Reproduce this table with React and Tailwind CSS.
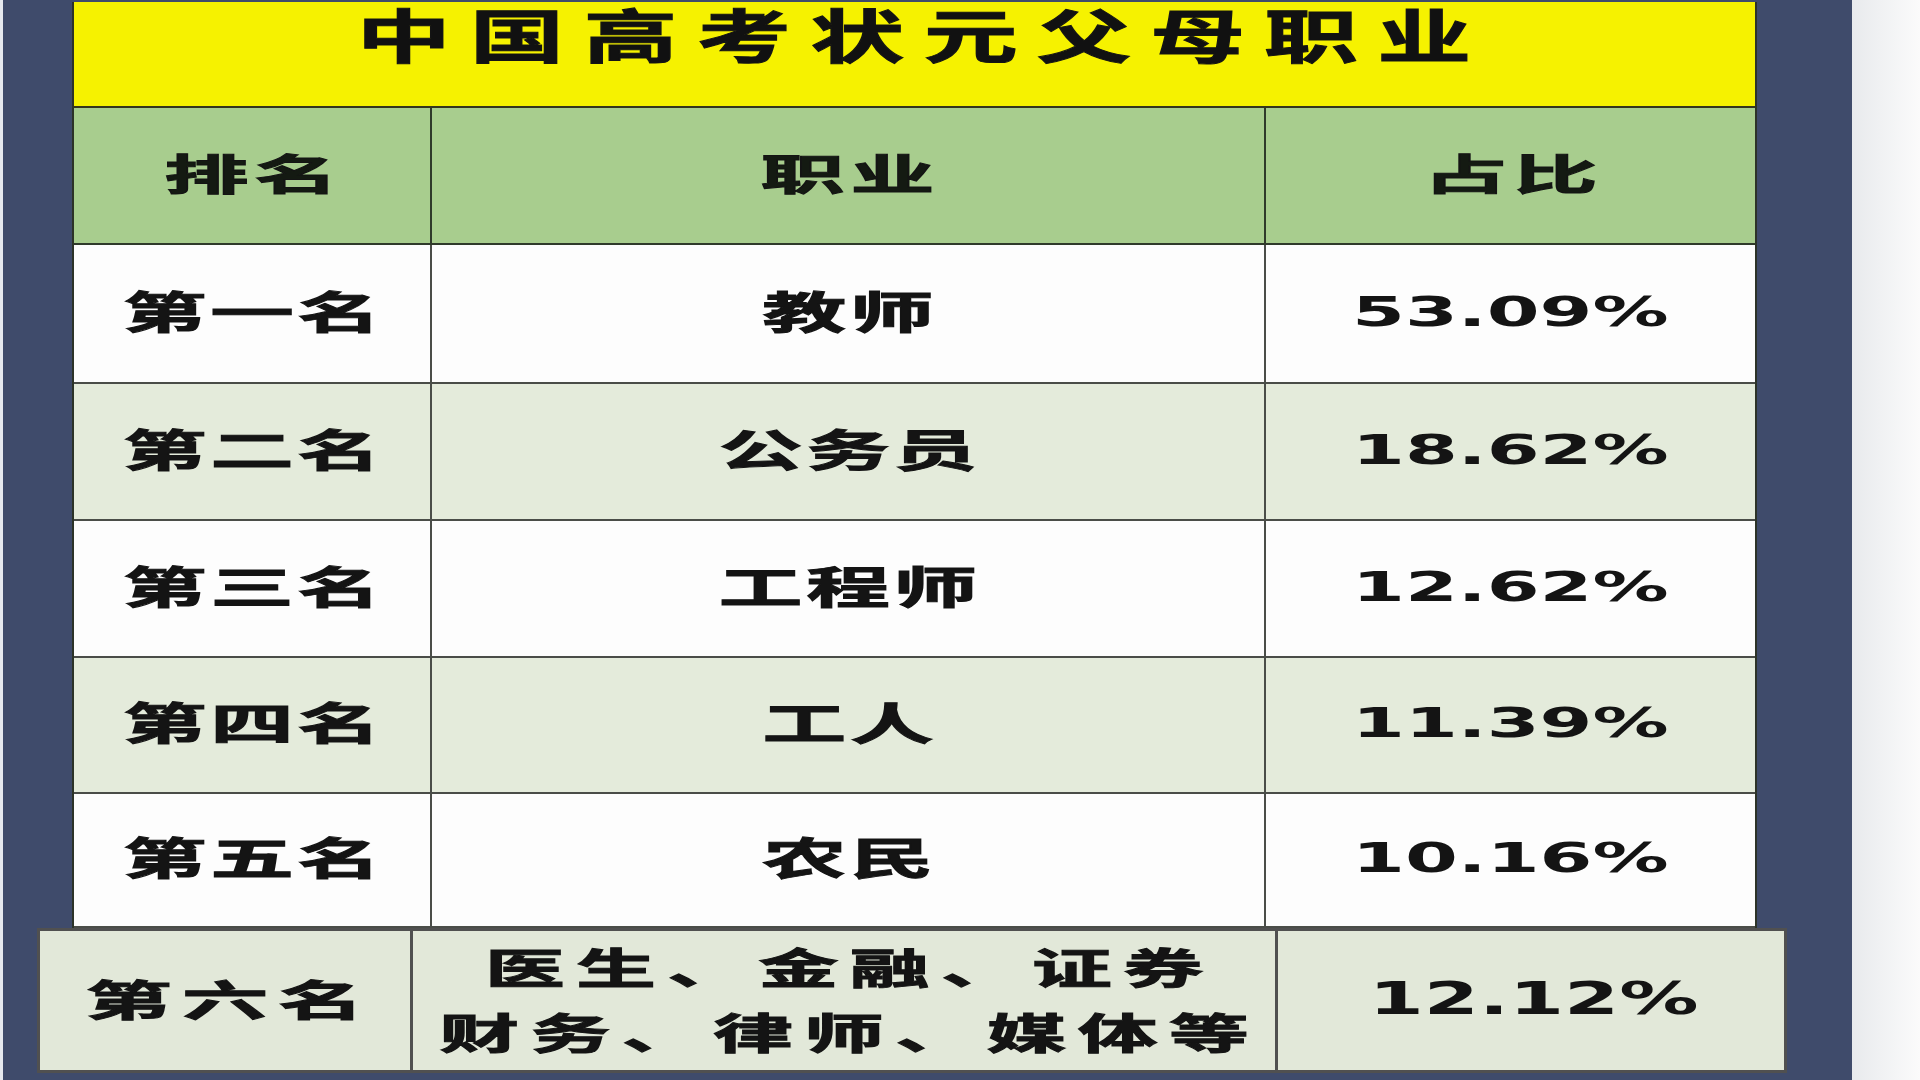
const CJK = "font-['Noto_Sans_CJK_SC','Noto_Sans_CJK_JP',sans-serif] font-bold [-webkit-text-stroke:1px_#141414]";
const NUM = "font-['DejaVu_Sans','Verdana',sans-serif] font-bold";

// ranked rows of the main table
const rows = [
  { rank: '第一名', job: '教师', share: '53.09%', h: 'h-[139px]', bg: 'bg-[#fdfdfd]' },
  { rank: '第二名', job: '公务员', share: '18.62%', h: 'h-[137px]', bg: 'bg-[#e4ebdb]' },
  { rank: '第三名', job: '工程师', share: '12.62%', h: 'h-[137px]', bg: 'bg-[#fdfdfd]' },
  { rank: '第四名', job: '工人', share: '11.39%', h: 'h-[136px]', bg: 'bg-[#e4ebdb]' },
  { rank: '第五名', job: '农民', share: '10.16%', h: 'h-[134px]', bg: 'bg-[#fdfdfd]' },
];

const BodyText = ({ children }) => (
  <span className={`inline-block whitespace-nowrap ${CJK} text-[44px] leading-none tracking-[2px] pl-[2px] scale-x-[1.9] text-[#141414]`}>
    {children}
  </span>
);

const NumText = ({ children, big = false }) => (
  <span
    className={`inline-block whitespace-nowrap ${NUM} leading-none text-[#141414] ${
      big ? 'text-[44px] scale-x-[1.8]' : 'text-[40px] scale-x-[1.9]'
    }`}
  >
    {children}
  </span>
);

const Row = ({ rank, job, share, h, bg }) => (
  <div className={`grid grid-cols-[358px_834px_489px] ${h} ${bg} border-b-2 border-[#4a4d48]`}>
    <div className="flex items-center justify-center pb-[8px] border-r-2 border-[#4a4d48]">
      <BodyText>{rank}</BodyText>
    </div>
    <div className="flex items-center justify-center pb-[8px] border-r-2 border-[#4a4d48]">
      <BodyText>{job}</BodyText>
    </div>
    <div className="flex items-center justify-center pb-[4px]">
      <NumText>{share}</NumText>
    </div>
  </div>
);

export default function App() {
  return (
    <div className="w-[1920px] h-[1080px] flex overflow-hidden bg-[#f3f4f6]">
      {/* thin light edge */}
      <div className="w-[3px] h-full bg-[#e6e9ef]" />

      {/* navy panel */}
      <div className="w-[1849px] h-full bg-[#3f4b6b] pt-[2px] pl-[69px] flex flex-col">
        <div className="w-[1685px] flex flex-col border-x-2 border-[#2c3328]">
          {/* title */}
          <div className="h-[106px] bg-[#f6f200] border-b-2 border-[#34361c] flex justify-center pt-[2px]">
            <span className={`inline-block whitespace-nowrap ${CJK} text-[58px] leading-none tracking-[12px] pl-[12px] scale-x-[1.62] text-[#111]`}>
              中国高考状元父母职业
            </span>
          </div>

          {/* header */}
          <div className="grid grid-cols-[358px_834px_489px] h-[137px] bg-[#a8cd8e] border-b-2 border-[#2f3a2a]">
            {['排名', '职业', '占比'].map((t, i) => (
              <div
                key={t}
                className={`flex items-center justify-center pb-[8px] ${i < 2 ? 'border-r-2 border-[#2f3a2a]' : ''}`}
              >
                <span className={`inline-block whitespace-nowrap ${CJK} text-[42px] leading-none tracking-[3px] pl-[3px] scale-x-[2] text-[#141a12]`}>
                  {t}
                </span>
              </div>
            ))}
          </div>

          {rows.map((r) => (
            <Row key={r.rank} {...r} />
          ))}
        </div>

        {/* sixth place, wider box */}
        <div className="-ml-[35px] w-[1750px] h-[145px] grid grid-cols-[373px_865px_512px] bg-[#e2e8d9] border-[3px] border-[#505050]">
          <div className="flex items-center justify-center pb-[6px] border-r-[3px] border-[#505050]">
            <span className={`inline-block whitespace-nowrap ${CJK} text-[42px] leading-none tracking-[5px] pl-[5px] scale-x-[2.05] text-[#141414]`}>
              第六名
            </span>
          </div>
          <div className="flex flex-col items-center justify-center pb-[6px] border-r-[3px] border-[#505050]">
            <span className={`inline-block whitespace-nowrap ${CJK} text-[42px] leading-[65px] tracking-[6px] pl-[6px] scale-x-[1.9] text-[#141414]`}>
              医生、金融、证券
            </span>
            <span className={`inline-block whitespace-nowrap ${CJK} text-[42px] leading-[65px] tracking-[6px] pl-[6px] scale-x-[1.9] text-[#141414]`}>
              财务、律师、媒体等
            </span>
          </div>
          <div className="flex items-center justify-center pb-[4px]">
            <NumText big>12.12%</NumText>
          </div>
        </div>
      </div>

      {/* right light margin */}
      <div className="flex-1 h-full bg-gradient-to-r from-[#e8eaed] to-[#fbfbfb]" />
    </div>
  );
}
